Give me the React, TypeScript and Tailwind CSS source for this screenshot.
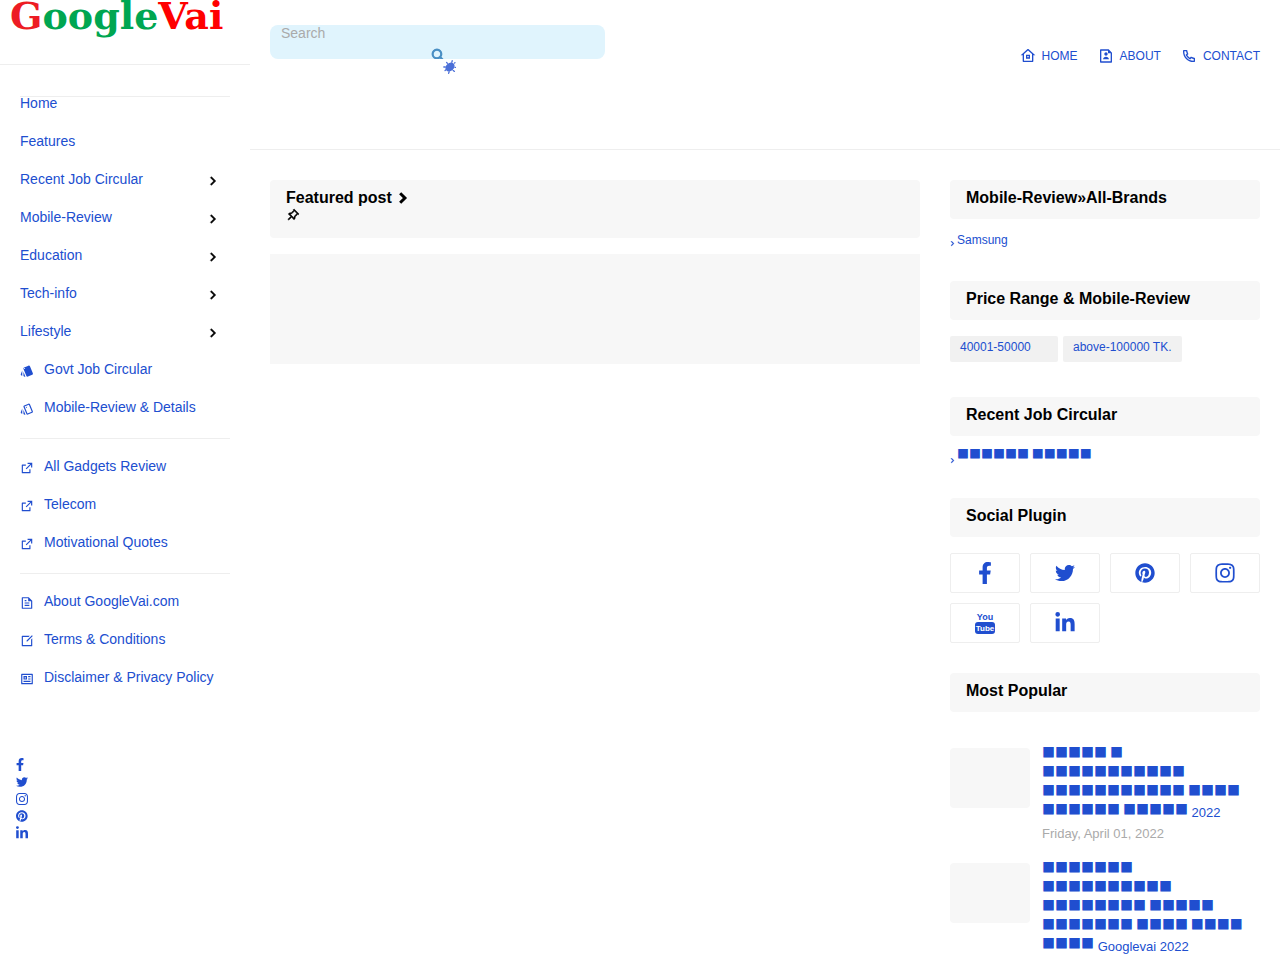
import type { ReactNode } from "react";
import type { IconType } from "react-icons";
import {
  RiArrowRightSLine, RiEditBoxLine, RiExternalLinkLine, RiFileTextLine, RiFileUserLine,
  RiHome8Line, RiPhoneLine, RiProfileLine, RiPushpinLine, RiSearchLine,
} from "react-icons/ri";
import { MdOutlineStyle, MdStyle } from "react-icons/md";
import { FaFacebookF, FaInstagram, FaLinkedinIn, FaPinterest, FaTwitter } from "react-icons/fa";

interface MenuItem {
  label: string;
  icon?: IconType;
  submenu?: boolean;
}

const MENU: MenuItem[][] = [
  [
    { label: "Home" },
    { label: "Features" },
    { label: "Recent Job Circular", submenu: true },
    { label: "Mobile-Review", submenu: true },
    { label: "Education", submenu: true },
    { label: "Tech-info", submenu: true },
    { label: "Lifestyle", submenu: true },
    { label: "Govt Job Circular", icon: MdStyle },
    { label: "Mobile-Review & Details", icon: MdOutlineStyle },
  ],
  [
    { label: "All Gadgets Review", icon: RiExternalLinkLine },
    { label: "Telecom", icon: RiExternalLinkLine },
    { label: "Motivational Quotes", icon: RiExternalLinkLine },
  ],
  [
    { label: "About GoogleVai.com", icon: RiFileTextLine },
    { label: "Terms & Conditions", icon: RiEditBoxLine },
    { label: "Disclaimer & Privacy Policy", icon: RiProfileLine },
  ],
];

const TOP_LINKS = [
  { label: "Home", icon: RiHome8Line },
  { label: "About", icon: RiFileUserLine },
  { label: "Contact", icon: RiPhoneLine },
];

const FOLLOW = [
  { name: "Facebook", icon: FaFacebookF, size: "h-[13px]" },
  { name: "Twitter", icon: FaTwitter, size: "h-3" },
  { name: "Instagram", icon: FaInstagram, size: "h-3.5" },
  { name: "Pinterest", icon: FaPinterest, size: "h-3" },
  { name: "LinkedIn", icon: FaLinkedinIn, size: "h-3.5" },
];

const PLUGINS = [
  { name: "Facebook", icon: FaFacebookF, size: "size-[22px]" },
  { name: "Twitter", icon: FaTwitter, size: "size-5" },
  { name: "Pinterest", icon: FaPinterest, size: "size-5" },
  { name: "Instagram", icon: FaInstagram, size: "size-[22px]" },
  { name: "YouTube", icon: YouTubeIcon, size: "size-[22px]" },
  { name: "LinkedIn", icon: FaLinkedinIn, size: "size-[22px]" },
];

const POPULAR = [
  { title: "■■■■■ ■ ■■■■■■■■■■■ ■■■■■■■■■■■ ■■■■ ■■■■■■ ■■■■■", suffix: "2022", date: "Friday, April 01, 2022" },
  { title: "■■■■■■■ ■■■■■■■■■■ ■■■■■■■■ ■■■■■ ■■■■■■■ ■■■■ ■■■■ ■■■■", suffix: "Googlevai 2022" },
];

function YouTubeIcon({ className }: { className?: string }) {
  return (
    <svg className={className} viewBox="0 0 22 22" fill="currentColor" aria-hidden="true">
      <text x="11" y="8" textAnchor="middle" className="font-['Liberation_Sans',sans-serif] text-[9px] font-bold">You</text>
      <rect x="1" y="10" width="20" height="12" rx="3" />
      <text x="11" y="19" textAnchor="middle" fill="#fff" className="font-['Liberation_Sans',sans-serif] text-[8px] font-bold">Tube</text>
    </svg>
  );
}

function VirusIcon() {
  return (
    <svg width="14" height="16" viewBox="0 0 14 16" fill="currentColor" stroke="currentColor" aria-hidden="true">
      <ellipse cx="8" cy="8" rx="5" ry="3.9" transform="rotate(-40 8 8)" stroke="none" />
      <path
        d="M10 2.6 10.2 1.6M12.6 4 13 3.6M5.2 4.2 4.6 3.4M3 8H1.8M3.6 11 3 11.6M7 13.2 6.6 14.4M11.4 11.6 12.4 12.4M13 8.4H13.4"
        fill="none" strokeWidth="1.3" strokeLinecap="round"
      />
      <path d="M9 5 10 2.6M5.2 4.2 7 6M3 8H5M3.6 11 5 10M7 13.2 7.6 11M11.4 11.6 10 10.5" fill="none" strokeWidth="0.7" />
    </svg>
  );
}

function Squares({ children }: { children: ReactNode }) {
  return <span className="align-[3px] font-['Noto_Sans_CJK_JP',sans-serif] leading-[10px] break-keep">{children}</span>;
}

function Widget({ title, children }: { title: string; children: ReactNode }) {
  return (
    <section>
      <h2 className="h-[39px] rounded-sm bg-[#f7f7f7] px-4 pt-2 text-base leading-5 font-bold text-black">{title}</h2>
      {children}
    </section>
  );
}

function Sidebar() {
  return (
    <aside className="w-[250px] shrink-0">
      <div className="h-[65px] border-b border-[#eee] pl-2.5">
        <a href="#" className="block font-['DejaVu_Serif',serif] text-[38px] leading-8 font-bold whitespace-nowrap text-[#00a651]">
          <span className="text-[#ed1c24]">G</span>oogle<span className="text-[#f00]">Vai</span>
        </a>
      </div>
      <nav className="mt-[31px] px-5">
        <hr className="-mb-px border-[#eee]" />
        {MENU.map((group, i) => (
          <ul key={i} className={i === 0 ? "" : "border-t border-[#eee] pt-5"}>
            {group.map(({ label, icon: Icon, submenu }) => (
              <li key={label} className="h-[38px]">
                <a href="#" className="flex items-start gap-2.5 text-sm leading-[14px]">
                  {Icon && <Icon size={14} className="mt-0.5" />}
                  {label}
                  {submenu && <RiArrowRightSLine size={16} className="mt-px mr-[9px] ml-auto text-black" strokeWidth={1} />}
                </a>
              </li>
            ))}
          </ul>
        ))}
      </nav>
      <ul className="mt-12 px-4">
        {FOLLOW.map(({ name, icon: Icon, size }) => (
          <li key={name}>
            <a href="#" aria-label={name} className="flex h-[17px] w-3 items-center">
              <Icon className={`${size} w-full`} preserveAspectRatio="xMinYMid meet" />
            </a>
          </li>
        ))}
      </ul>
    </aside>
  );
}

function Header() {
  return (
    <header className="flex h-[150px] items-start justify-between border-b border-[#eee] px-5">
      <form className="relative mt-[25px] w-[335px]">
        <div className="relative h-[34px] overflow-hidden rounded-lg bg-[#e0f4fd]">
          <input
            type="search"
            aria-label="Search"
            placeholder="Search"
            className="block w-full bg-transparent px-[11px] text-sm leading-4 outline-none placeholder:text-[#aaa]"
          />
          <button type="submit" aria-label="Submit search" className="absolute top-[23px] left-[161px] text-[#4a8fc4]">
            <RiSearchLine size={13} strokeWidth={2} />
          </button>
        </div>
        <button type="button" aria-label="Toggle theme" className="absolute top-[34px] left-[172px] text-[#4c70d8]">
          <VirusIcon />
        </button>
      </form>
      <nav className="mt-12 flex gap-5">
        {TOP_LINKS.map(({ label, icon: Icon }) => (
          <a key={label} href="#" className="flex items-center gap-1.5 text-xs leading-4 uppercase">
            <Icon size={16} />
            {label}
          </a>
        ))}
      </nav>
    </header>
  );
}

export default function App() {
  return (
    <div className="flex bg-white font-['Liberation_Sans',Arial,sans-serif] text-[#204ecf]">
      <Sidebar />
      <div className="min-w-0 flex-1">
        <Header />
        <div className="flex gap-[30px] px-5 pt-[30px]">
          <main className="min-w-0 flex-1 space-y-4">
            <h2 className="h-[58px] rounded-sm bg-[#f7f7f7] px-4 pt-2 text-base leading-5 font-bold text-black">
              <span className="flex items-center gap-0.5">
                Featured post
                <RiArrowRightSLine size={18} strokeWidth={2} />
              </span>
              <RiPushpinLine size={14} strokeWidth={1} />
            </h2>
            <div className="h-[110px] bg-[#f7f7f7]" />
          </main>

          <aside className="w-[310px] shrink-0">
            <Widget title="Mobile-Review»All-Brands">
              <a href="#" className="mt-[13px] mb-[33px] flex h-4 text-xs leading-4">
                <RiArrowRightSLine size={9} className="mt-[7px] -ml-0.5" strokeWidth={1} />
                Samsung
              </a>
            </Widget>
            <Widget title="Price Range & Mobile-Review">
              <div className="mt-4 mb-[35px] flex gap-[5px] text-xs leading-4">
                <a href="#" className="h-[26px] w-[108px] rounded-xs bg-[#f1f1f1] px-2.5 pt-[3px]">40001-50000</a>
                <a href="#" className="h-[26px] rounded-xs bg-[#f1f1f1] px-2.5 pt-[3px]">above-100000 TK.</a>
              </div>
            </Widget>
            <Widget title="Recent Job Circular">
              <a href="#" className="mt-[13px] mb-[33px] flex h-4 text-xs leading-4">
                <RiArrowRightSLine size={9} className="mt-[7px] -ml-0.5" strokeWidth={1} />
                <span><Squares>■■■■■■ ■■■■■</Squares></span>
              </a>
            </Widget>
            <Widget title="Social Plugin">
              <div className="mt-4 mb-[30px] grid grid-cols-4 gap-2.5">
                {PLUGINS.map(({ name, icon: Icon, size }) => (
                  <a key={name} href="#" aria-label={name} className="flex h-10 items-center justify-center rounded-xs border border-[#eee]">
                    <Icon className={size} />
                  </a>
                ))}
              </div>
            </Widget>
            <Widget title="Most Popular">
              <ul className="mt-9 space-y-5">
                {POPULAR.map((post) => (
                  <li key={post.title} className="flex gap-3">
                    <div className="h-[60px] w-20 shrink-0 rounded-sm bg-[#f7f7f7]" />
                    <div className="min-w-0 flex-1 text-[13px] leading-[19px]">
                      <a href="#" className="-mt-0.5 mb-0.5 block">
                        <Squares>{post.title}</Squares> {post.suffix}
                      </a>
                      {post.date && <time className="block text-[#aaa]">{post.date}</time>}
                    </div>
                  </li>
                ))}
              </ul>
            </Widget>
          </aside>
        </div>
      </div>
    </div>
  );
}
